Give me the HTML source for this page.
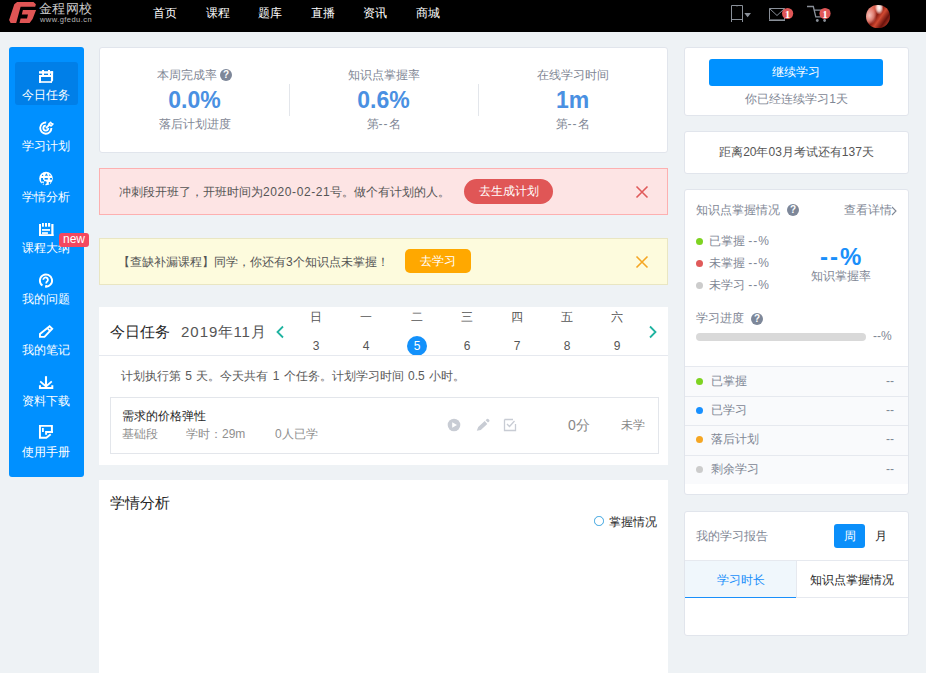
<!DOCTYPE html>
<html><head><meta charset="utf-8">
<style>
*{margin:0;padding:0;box-sizing:border-box}
html,body{width:926px;height:673px;overflow:hidden}
body{background:#eef2f5;font-family:"Liberation Sans",sans-serif;position:relative;color:#262626}
.a{position:absolute;white-space:nowrap}
#hdr{left:0;top:0;width:926px;height:32px;background:#000}
.nav{position:absolute;top:6px;color:#fff;font-size:12px;line-height:14px}
#side{left:9px;top:47px;width:75px;height:430px;background:#0090ff;border-radius:3px}
.si{position:absolute;left:-1px;width:75px;color:#fff;font-size:12px;line-height:14px;text-align:center}
.card{position:absolute;background:#fff;border:1px solid #e1e5ec;border-radius:3px}
.t12{font-size:12px;line-height:14px}
.gray{color:#7f8795}
.qi{position:absolute;width:12px;height:12px;border-radius:50%;background:#7d8799;color:#fff;font-size:10px;line-height:12px;text-align:center;font-weight:bold}
.big{font-size:23px;line-height:24px;font-weight:bold;color:#4a90e2;text-align:center}
.ctr{text-align:center}
.dot{position:absolute;width:7px;height:7px;border-radius:50%}
.hl{position:absolute;height:1px;background:#e6e9ef}
</style></head>
<body>
<!-- header -->
<div id="hdr" class="a">
  <svg class="a" style="left:0;top:0" width="40" height="26" viewBox="0 0 40 26">
    <path d="M14.3 4.3L17.1 1.9H33.5L35.9 4.3L35.2 6.8H20.6L16.2 22.9H10.6L9.1 20Z" fill="#e05555"/>
    <path d="M22.9 9.9H36.1L32.6 19L29.6 22.9H19.5L20.6 18.4H27L28 14.4H21.8Z" fill="#e05555"/>
  </svg>
  <div class="a" style="left:39px;top:2px;font-size:13px;line-height:14px;color:#c8c8c8;letter-spacing:0.4px">金程网校</div>
  <div class="a" style="left:40px;top:16px;font-size:7.5px;line-height:8px;color:#b8b8b8;letter-spacing:0.45px">www.gfedu.cn</div>
  <div class="nav" style="left:153px">首页</div>
  <div class="nav" style="left:206px">课程</div>
  <div class="nav" style="left:258px">题库</div>
  <div class="nav" style="left:311px">直播</div>
  <div class="nav" style="left:363px">资讯</div>
  <div class="nav" style="left:416px">商城</div>
  <!-- phone -->
  <svg class="a" style="left:720px;top:0" width="120" height="30" viewBox="720 0 120 30">
    <path d="M731.5 22V5.5H742.5V22 M731 19.5H743" fill="none" stroke="#8a9099" stroke-width="1"/>
    <path d="M736 5.5L737 6.8L738 5.5Z" fill="#8a9099"/>
    <path d="M744.3 13H751L747.6 17.2Z" fill="#8a9099"/>
    <path d="M769.5 19.5V8.5H784.5V19.5" fill="none" stroke="#8a9099" stroke-width="1"/>
    <path d="M769 20.2H785" fill="none" stroke="#8a9099" stroke-width="1.6"/>
    <path d="M769.5 8.5L777 15.5L784.5 8.5" fill="none" stroke="#8a9099" stroke-width="1"/>
    <path d="M807 6.5H813.3L815.8 16.8H826 M813.8 10.2H829.5" fill="none" stroke="#8a9099" stroke-width="1.3"/>
    <circle cx="817.3" cy="20.5" r="1.4" fill="#8a9099"/><circle cx="824.6" cy="20.5" r="1.4" fill="#8a9099"/>
    <circle cx="787.6" cy="13.5" r="5.6" fill="#e05656"/>
    <circle cx="825" cy="13.5" r="5.6" fill="#e05656"/>
    <text x="787.6" y="17.6" font-family="Liberation Serif" font-size="11" font-weight="bold" fill="#fff" text-anchor="middle">1</text>
    <text x="825" y="17.6" font-family="Liberation Serif" font-size="11" font-weight="bold" fill="#fff" text-anchor="middle">1</text>
  </svg>
  <!-- avatar -->
  <div class="a" style="left:866px;top:4.5px;width:23.5px;height:23.5px;border-radius:50%;background:radial-gradient(ellipse 18% 30% at 55% 12%,#fff 0%,rgba(255,240,235,0.8) 50%,transparent 100%),radial-gradient(ellipse 30% 40% at 15% 45%,#f4c0b8 0%,rgba(235,150,140,0.7) 60%,transparent 100%),linear-gradient(125deg,#e88a80 0%,#d85a48 28%,#8c1c12 45%,#d04a32 58%,#6a120c 75%,#b83a28 90%,#d86048 100%)"></div>
</div>

<!-- sidebar -->
<div id="side" class="a">
  <div class="a" style="left:6px;top:15px;width:63px;height:43px;background:#007fe8;border-radius:3px"></div>
  <div class="si" style="top:41px">今日任务</div>
  <div class="si" style="top:92px">学习计划</div>
  <div class="si" style="top:143px">学情分析</div>
  <div class="si" style="top:194px">课程大纲</div>
  <div class="si" style="top:245px">我的问题</div>
  <div class="si" style="top:296px">我的笔记</div>
  <div class="si" style="top:347px">资料下载</div>
  <div class="si" style="top:398px">使用手册</div>
  <div class="a" style="left:50px;top:186px;width:30px;height:14px;background:#f4475f;border-radius:3px;color:#fff;font-size:12px;line-height:13px;text-align:center">new</div>
</div>
<svg class="a" style="left:0;top:0" width="100" height="480" viewBox="0 0 100 480">
  <g fill="#fff" transform="translate(39 70)">
    <rect x="0" y="1.2" width="14.1" height="2.4"/>
    <rect x="3.1" y="0" width="1.9" height="6.5"/><rect x="9" y="0" width="2" height="5.5"/>
    <rect x="0" y="5" width="12.5" height="2"/>
    <rect x="0" y="5" width="2" height="7.8"/>
    <rect x="0" y="11.2" width="13" height="1.6"/>
    <path d="M11.9 1.2H14.1V10.5L12.4 12.8H11.5L11.9 11.5Z"/>
  </g>
  <g fill="none" stroke="#fff" transform="translate(39 121)">
    <path d="M7.2 1.5A5.6 5.6 0 1 0 12.4 7.1" stroke-width="1.9"/>
    <path d="M6.8 4.6A2.5 2.5 0 1 0 9.3 7.1" stroke-width="1.8"/>
    <path d="M7 7.2L11.2 3" stroke-width="1.8"/>
    <path d="M9.6 3.2L11.6 1.2L12.5 2.6L14 2.9L12 5Z" stroke-width="1.5" stroke-linejoin="round"/>
  </g>
  <g transform="translate(39 172)">
    <circle cx="7" cy="6.5" r="6.8" fill="#fff"/>
    <g fill="#0090ff">
      <circle cx="3.6" cy="3.4" r="0.7"/>
      <path d="M5.8 3.7L7.4 1.2L9 3.7Z"/>
      <path d="M10.1 2.3L12 3.7H10.1Z"/>
      <path d="M2.1 6H4V7.8H5V9.5H2.1Z"/>
      <rect x="5.6" y="6" width="3.2" height="1.6"/>
      <rect x="10.9" y="6" width="2.1" height="1.6"/>
      <rect x="2.3" y="10.8" width="2.3" height="1.3"/>
      <path d="M5 9.2H7.2L7.8 11L5.8 13.3H4.8Z"/>
      <path d="M9.8 10.1L11.5 10L10.8 11.9H9.8Z"/>
    </g>
  </g>
  <g fill="#fff" transform="translate(39 223)">
    <rect x="0" y="1" width="2" height="12"/><rect x="12.3" y="1" width="2.2" height="12"/>
    <rect x="0" y="11.2" width="14.5" height="1.8"/>
    <rect x="3" y="0" width="1.9" height="3.7"/><rect x="6" y="0" width="2" height="3.7"/><rect x="9" y="0" width="2.2" height="3.7"/>
    <rect x="3" y="6.1" width="8" height="1.7"/><rect x="3" y="9.2" width="5.9" height="1.7"/>
  </g>
  <g fill="none" stroke="#fff" transform="translate(39 274)">
    <path d="M6.1 12.6A6.1 6.1 0 1 0 3.4 11.5" stroke-width="1.9"/>
    <path d="M4.3 5.8A2.3 2.3 0 1 1 8.3 7.3Q7.2 8 7.2 9.5" stroke-width="1.8"/>
    <rect x="6.3" y="11.1" width="1.9" height="1.6" fill="#fff" stroke="none"/>
  </g>
  <g fill="none" stroke="#fff" stroke-width="1.9" transform="translate(39 325)">
    <path d="M0.95 11.85V8.9L10.6 1.3L13.2 3.7L5.5 11.85Z"/>
    <path d="M8.4 3.2L10.9 5.9" stroke-width="1.6"/>
  </g>
  <g fill="none" stroke="#fff" transform="translate(39 376)">
    <path d="M7 0.2V10.6" stroke-width="2.1"/>
    <path d="M1.2 5.3L7 10.5L12.8 5.3" stroke-width="1.8"/>
    <path d="M0.95 9.2V12.1H13.3V9.2" stroke-width="2"/>
  </g>
  <g fill="none" stroke="#fff" stroke-width="1.95" transform="translate(39 424)">
    <path d="M12.9 8.7V1.85H0.95V13.8H7.3L11.7 10.3"/>
    <path d="M14 7.9H7.1V10.8"/>
    <path d="M3.9 4V7.9" stroke-width="1.8"/>
  </g>
</svg>
<!-- stats card -->
<div class="card" style="left:99px;top:47px;width:569px;height:106px">
  <div class="a t12 gray" style="left:57px;top:20px">本周完成率</div>
  <div class="qi" style="left:120px;top:21px">?</div>
  <div class="a big" style="left:0;width:189px;top:40px">0.0%</div>
  <div class="a t12 gray ctr" style="left:0;width:189px;top:69px">落后计划进度</div>
  <div class="a" style="left:189px;top:36px;width:1px;height:32px;background:#e3e6eb"></div>
  <div class="a t12 gray ctr" style="left:189px;width:189px;top:20px">知识点掌握率</div>
  <div class="a big" style="left:189px;width:189px;top:40px">0.6%</div>
  <div class="a t12 gray ctr" style="left:189px;width:189px;top:69px">第<span style="letter-spacing:1px">--</span>名</div>
  <div class="a" style="left:378px;top:36px;width:1px;height:32px;background:#e3e6eb"></div>
  <div class="a t12 gray ctr" style="left:378px;width:189px;top:20px">在线学习时间</div>
  <div class="a big" style="left:378px;width:189px;top:40px">1m</div>
  <div class="a t12 gray ctr" style="left:378px;width:189px;top:69px">第<span style="letter-spacing:1px">--</span>名</div>
</div>

<!-- pink banner -->
<div class="a" style="left:99px;top:168px;width:569px;height:47px;background:#fde4e4;border:1px solid #fdb0b0">
  <div class="a t12" style="left:19px;top:16px;color:#555">冲刺段开班了，开班时间为<span style="letter-spacing:0.6px">2020-02-21</span>号。做个有计划的人。</div>
  <div class="a t12" style="left:364px;top:10px;width:89px;height:25px;border-radius:13px;background:#e05656;color:#fff;text-align:center;line-height:25px">去生成计划</div>
  <svg class="a" style="left:535px;top:16px" width="14" height="14" viewBox="0 0 14 14"><path d="M1.5 1.5L12.5 12.5M12.5 1.5L1.5 12.5" stroke="#e05a5a" stroke-width="1.6"/></svg>
</div>
<!-- yellow banner -->
<div class="a" style="left:99px;top:238px;width:569px;height:47px;background:#fdfbdd;border:1px solid #e9e6c2">
  <div class="a t12" style="left:18px;top:16px;color:#555">【查缺补漏课程】同学，你还有3个知识点未掌握！</div>
  <div class="a t12" style="left:305px;top:10px;width:66px;height:24px;border-radius:5px;background:#ffa800;color:#fff;text-align:center;line-height:24px">去学习</div>
  <svg class="a" style="left:535px;top:16px" width="14" height="14" viewBox="0 0 14 14"><path d="M1.5 1.5L12.5 12.5M12.5 1.5L1.5 12.5" stroke="#f5a623" stroke-width="1.6"/></svg>
</div>

<!-- calendar card -->
<div class="a" style="left:99px;top:307px;width:569px;height:158px;background:#fff">
  <div class="a" style="left:11px;top:16px;font-size:15px;line-height:18px;color:#262626">今日任务</div>
  <div class="a" style="left:82px;top:16px;font-size:15px;line-height:18px;color:#555"><span style="letter-spacing:1px">2019</span>年<span style="letter-spacing:1px">11</span>月</div>
  <svg class="a" style="left:176px;top:18px" width="10" height="14" viewBox="0 0 10 14"><path d="M8 1.5L2.5 7L8 12.5" fill="none" stroke="#1fb3a0" stroke-width="1.8"/></svg>
  <svg class="a" style="left:549px;top:18px" width="10" height="14" viewBox="0 0 10 14"><path d="M2 1.5L7.5 7L2 12.5" fill="none" stroke="#1fb3a0" stroke-width="1.8"/></svg>
  <div class="a t12 ctr" style="left:197px;width:40px;top:3px;color:#555">日</div>
  <div class="a t12 ctr" style="left:247px;width:40px;top:3px;color:#555">一</div>
  <div class="a t12 ctr" style="left:298px;width:40px;top:3px;color:#555">二</div>
  <div class="a t12 ctr" style="left:348px;width:40px;top:3px;color:#555">三</div>
  <div class="a t12 ctr" style="left:398px;width:40px;top:3px;color:#555">四</div>
  <div class="a t12 ctr" style="left:448px;width:40px;top:3px;color:#555">五</div>
  <div class="a t12 ctr" style="left:498px;width:40px;top:3px;color:#555">六</div>
  <div class="a t12 ctr" style="left:197px;width:40px;top:32px;color:#555">3</div>
  <div class="a t12 ctr" style="left:247px;width:40px;top:32px;color:#555">4</div>
  <div class="a ctr" style="left:308px;width:20px;height:20px;top:29px;border-radius:50%;background:#1391fb;color:#fff;font-size:12px;line-height:20px">5</div>
  <div class="a t12 ctr" style="left:348px;width:40px;top:32px;color:#555">6</div>
  <div class="a t12 ctr" style="left:398px;width:40px;top:32px;color:#555">7</div>
  <div class="a t12 ctr" style="left:448px;width:40px;top:32px;color:#555">8</div>
  <div class="a t12 ctr" style="left:498px;width:40px;top:32px;color:#555">9</div>
  <div class="hl" style="left:0;top:48px;width:569px"></div>
  <div class="a t12" style="left:22px;top:62px;color:#5a5a5a;word-spacing:1px">计划执行第 5 天。今天共有 1 个任务。计划学习时间 0.5 小时。</div>
  <div class="a" style="left:11px;top:90px;width:549px;height:57px;border:1px solid #e3e6eb">
    <div class="a t12" style="left:11px;top:11px;color:#262626">需求的价格弹性</div>
    <div class="a t12" style="left:11px;top:29px;color:#8f8f8f">基础段</div>
    <div class="a t12" style="left:75px;top:29px;color:#8f8f8f">学时：29m</div>
    <div class="a t12" style="left:164px;top:29px;color:#8f8f8f">0人已学</div>
    <svg class="a" style="left:336px;top:20px" width="14" height="14" viewBox="0 0 14 14"><circle cx="7" cy="7" r="6.3" fill="#c8ccd4"/><path d="M5.2 4.2L10 7L5.2 9.8Z" fill="#fff"/></svg>
    <svg class="a" style="left:364px;top:19px" width="16" height="16" viewBox="0 0 16 16"><path d="M1.8 13.8L3.2 9.9L9.7 4.1L12.3 7.1L5.8 12.9Z M10.6 3.3L11.9 2Q12.6 1.4 13.3 2L14.3 3.1Q14.8 3.8 14.2 4.4L13 5.6Z" fill="#c8ccd4"/></svg>
    <svg class="a" style="left:392px;top:20px" width="14" height="14" viewBox="0 0 14 14"><path d="M1.5 1.5H10 M1.5 1.5V12.5H12.5V6" fill="none" stroke="#c8ccd4" stroke-width="1.3"/><path d="M4 6L6.5 8.5L11.5 3" fill="none" stroke="#c8ccd4" stroke-width="1.3"/></svg>
    <div class="a" style="left:457px;top:19px;font-size:14px;line-height:16px;color:#888">0分</div>
    <div class="a t12" style="left:510px;top:20px;color:#888">未学</div>
  </div>
</div>

<!-- analysis card -->
<div class="a" style="left:99px;top:480px;width:569px;height:193px;background:#fff">
  <div class="a" style="left:11px;top:14px;font-size:15px;line-height:18px;color:#262626">学情分析</div>
  <div class="a" style="left:495px;top:36px;width:9.5px;height:9.5px;border-radius:50%;border:1.5px solid #3ba4e0"></div>
  <div class="a t12" style="left:510px;top:35px;color:#262626">掌握情况</div>
</div>

<!-- right column -->
<div class="card" style="left:684px;top:47px;width:225px;height:69px">
  <div class="a t12" style="left:24px;top:11px;width:174px;height:27px;background:#0091ff;border-radius:3px;color:#fff;text-align:center;line-height:27px">继续学习</div>
  <div class="a t12 gray ctr" style="left:0;width:223px;top:44px">你已经连续学习1天</div>
</div>
<div class="card" style="left:684px;top:131px;width:225px;height:43px">
  <div class="a t12 ctr" style="left:0;width:223px;top:13px;color:#555">距离20年03月考试还有137天</div>
</div>
<div class="card" style="left:684px;top:189px;width:225px;height:306px">
  <div class="a t12 gray" style="left:11px;top:13px">知识点掌握情况</div>
  <div class="qi" style="left:102px;top:14px">?</div>
  <div class="a t12 gray" style="left:159px;top:13px">查看详情</div><svg class="a" style="left:206px;top:16px" width="6" height="10" viewBox="0 0 6 10"><path d="M1 1L5 5L1 9" fill="none" stroke="#7f8795" stroke-width="1.1"/></svg>
  <div class="dot" style="left:11px;top:48px;background:#7ed321"></div>
  <div class="a t12 gray" style="left:24px;top:44px">已掌握 <span style="letter-spacing:1px">--%</span></div>
  <div class="dot" style="left:11px;top:70px;background:#e05a5a"></div>
  <div class="a t12 gray" style="left:24px;top:66px">未掌握 <span style="letter-spacing:1px">--%</span></div>
  <div class="dot" style="left:11px;top:92px;background:#ccc"></div>
  <div class="a t12 gray" style="left:24px;top:88px">未学习 <span style="letter-spacing:1px">--%</span></div>
  <div class="a" style="left:135px;top:54px;font-size:24px;line-height:26px;color:#1a8ffa;font-weight:bold;letter-spacing:2px">--%</div>
  <div class="a t12 gray" style="left:126px;top:79px">知识掌握率</div>
  <div class="a t12 gray" style="left:11px;top:121px">学习进度</div>
  <div class="qi" style="left:66px;top:123px">?</div>
  <div class="a" style="left:11px;top:143px;width:170px;height:8px;border-radius:4px;background:#d9d9d9"></div>
  <div class="a t12 gray" style="left:188px;top:139px">--%</div>
  <div class="a" style="left:0;top:176px;width:223px;height:118px;background:#f9fafc"></div>
  <div class="hl" style="left:0;top:176px;width:223px"></div>
  <div class="hl" style="left:0;top:206px;width:223px"></div>
  <div class="hl" style="left:0;top:235px;width:223px"></div>
  <div class="hl" style="left:0;top:265px;width:223px"></div>
  <div class="dot" style="left:11px;top:188px;background:#7ed321"></div>
  <div class="a t12 gray" style="left:26px;top:184px">已掌握</div>
  <div class="a t12 gray" style="left:201px;top:184px">--</div>
  <div class="dot" style="left:11px;top:217px;background:#1890ff"></div>
  <div class="a t12 gray" style="left:26px;top:213px">已学习</div>
  <div class="a t12 gray" style="left:201px;top:213px">--</div>
  <div class="dot" style="left:11px;top:246px;background:#f5a623"></div>
  <div class="a t12 gray" style="left:26px;top:242px">落后计划</div>
  <div class="a t12 gray" style="left:201px;top:242px">--</div>
  <div class="dot" style="left:11px;top:276px;background:#ccc"></div>
  <div class="a t12 gray" style="left:26px;top:272px">剩余学习</div>
  <div class="a t12 gray" style="left:201px;top:272px">--</div>
</div>
<div class="card" style="left:684px;top:511px;width:225px;height:125px">
  <div class="a t12 gray" style="left:11px;top:17px">我的学习报告</div>
  <div class="a t12 ctr" style="left:149px;top:12px;width:31px;height:24px;background:#0b8ffa;border-radius:3px;color:#fff;line-height:24px">周</div>
  <div class="a t12 ctr" style="left:188px;top:17px;width:16px;color:#262626">月</div>
  <div class="hl" style="left:0;top:48px;width:223px"></div>
  <div class="a" style="left:0;top:49px;width:111px;height:37px;background:#f0f7fc;border-bottom:1.5px solid #1a8ffa"></div><div class="a" style="left:111px;top:49px;width:1px;height:36px;background:#e6e9ef"></div>
  <div class="a t12 ctr" style="left:0;width:111px;top:61px;color:#1a8ffa">学习时长</div>
  <div class="a t12 ctr" style="left:111px;width:112px;top:61px;color:#262626">知识点掌握情况</div>
  <div class="hl" style="left:111px;top:85px;width:112px"></div>
</div>
</body></html>
